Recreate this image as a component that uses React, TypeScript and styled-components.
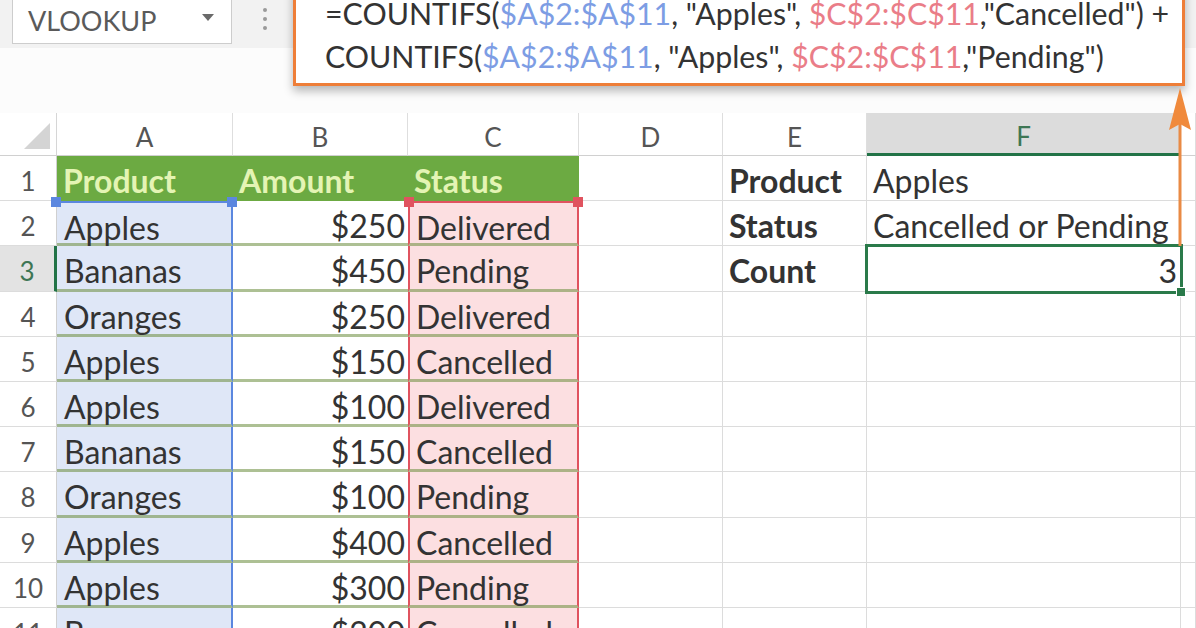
import React from 'react';
import styled, { createGlobalStyle, css } from 'styled-components';

const FONT = `Lato, "Open Sans", "Liberation Sans", sans-serif`;

const GlobalStyle = createGlobalStyle`
  html, body { margin: 0; padding: 0; }
  body { background: #fff; font-family: ${FONT}; overflow: hidden; }
  * { box-sizing: border-box; }
`;

const Page = styled.div`
  width: 1196px;
  height: 628px;
  overflow: hidden;
  position: relative;
  background: #fff;
  display: flex;
  flex-direction: column;
`;

const TopBar = styled.div`
  height: 113px;
  flex: none;
  display: flex;
  align-items: flex-start;
  background: linear-gradient(#f2f2f2 0 48px, #fcfcfc 48px);
  position: relative;
  z-index: 3;
`;

const NameBox = styled.div`
  margin-left: 12px;
  margin-top: -2px;
  width: 220px;
  height: 46px;
  border: 1.5px solid #cdcdcd;
  border-top: none;
  background: #fff;
  display: flex;
  align-items: center;
  justify-content: space-between;
  padding: 0 17px 0 15px;
  color: #5a5a5a;
  font-size: 27px;
`;

const Caret = styled.span`
  width: 0;
  height: 0;
  border-left: 6px solid transparent;
  border-right: 6px solid transparent;
  border-top: 7px solid #6a6a6a;
  margin-top: -6px;
`;

const Dots = styled.div`
  margin-left: 31px;
  margin-top: 8px;
  display: flex;
  flex-direction: column;
  gap: 5px;
`;

const Dot = styled.span`
  width: 4px;
  height: 4px;
  border-radius: 50%;
  background: #9a9a9a;
`;

const FormulaBox = styled.div`
  margin-left: 26px;
  margin-top: -14px;
  width: 892px;
  height: 100px;
  border: 3px solid #ee7e38;
  background: #fff;
  box-shadow: 0 5px 9px rgba(0, 0, 0, 0.28);
  padding: 3px 0 0 29px;
  font-size: 30.3px;
  color: #333;
`;

const FormulaLine = styled.div`
  line-height: 43px;
  white-space: nowrap;
`;

const Ref = styled.span<{ $c: 'blue' | 'red' }>`
  color: ${(p) => (p.$c === 'blue' ? '#7d9de4' : '#ea7d88')};
`;

const Sheet = styled.div`
  display: grid;
  grid-template-columns: 57px 176px 175px 171px 144px 144px 314px 1fr;
  grid-template-rows: 43px;
  grid-auto-rows: 45.2px;
  position: relative;
  flex: none;
`;

const Corner = styled.div`
  position: relative;
  border-right: 1.5px solid #d6d6d6;
  border-bottom: 1.5px solid #d0d0d0;
  &::after {
    content: '';
    position: absolute;
    right: 6px;
    bottom: 6px;
    width: 0;
    height: 0;
    border-left: 26px solid transparent;
    border-bottom: 26px solid #d4d4d4;
  }
`;

const ColHead = styled.div<{ $active?: boolean }>`
  display: flex;
  align-items: center;
  justify-content: center;
  font-size: 26px;
  color: #555;
  border-right: 1.5px solid #dedede;
  border-bottom: 1.5px solid #d0d0d0;
  padding-top: 5px;
  ${(p) =>
    p.$active &&
    css`
      background: #dcdcdc;
      color: #3e7654;
      border-bottom: 3px solid #227347;
    `}
`;

const RowHead = styled.div<{ $active?: boolean }>`
  display: flex;
  align-items: center;
  justify-content: center;
  font-size: 26px;
  color: #555;
  border-right: 1.5px solid #d0d0d0;
  border-bottom: 1.5px solid #dcdcdc;
  padding-top: 6px;
  ${(p) =>
    p.$active &&
    css`
      background: #e3e3e3;
      color: #3e7654;
      border-right: 3px solid #227347;
    `}
`;

type Kind = 'plain' | 'head' | 'blue' | 'red' | 'table';

const TABLE_LINE = 'rgba(105, 140, 60, 0.55)';

const Cell = styled.div<{
  $kind?: Kind;
  $right?: boolean;
  $bold?: boolean;
  $first?: boolean;
  $active?: boolean;
}>`
  position: relative;
  font-size: 32px;
  line-height: 44px;
  color: #333;
  white-space: nowrap;
  overflow: visible;
  padding: 3px 6px 0 6px;
  text-align: ${(p) => (p.$right ? 'right' : 'left')};
  font-weight: ${(p) => (p.$bold ? 700 : 400)};
  border-right: 1.5px solid #dcdcdc;
  border-bottom: 1.5px solid #dcdcdc;
  ${(p) =>
    p.$kind === 'head' &&
    css`
      background: #6caa42;
      color: #e4f4b4;
      font-weight: 700;
      border-right: none;
      border-bottom: none;
    `}
  ${(p) =>
    p.$kind === 'blue' &&
    css`
      background: #dfe7f7;
      border-right: 2.5px solid #5b87df;
      border-bottom: 3px solid ${TABLE_LINE};
      border-top: ${p.$first ? '2.5px solid #5b87df' : 'none'};
      padding-left: 7px;
    `}
  ${(p) =>
    p.$kind === 'table' &&
    css`
      border-right: none;
      border-bottom: 3px solid ${TABLE_LINE};
      padding-right: 3px;
    `}
  ${(p) =>
    p.$kind === 'red' &&
    css`
      background: #fcdfe1;
      border-left: 2.5px solid #e0535f;
      border-right: 2.5px solid #e0535f;
      border-bottom: 3px solid ${TABLE_LINE};
      border-top: ${p.$first ? '2.5px solid #e0535f' : 'none'};
    `}
  ${(p) =>
    p.$active &&
    css`
      z-index: 1;
      outline: 3px solid #2a7a4a;
      outline-offset: -1px;
      padding-right: 3px;
      &::after {
        content: '';
        position: absolute;
        right: -6px;
        bottom: -6px;
        width: 8px;
        height: 8px;
        background: #2a7a4a;
        border: 1px solid #fff;
      }
    `}
`;

const Handle = styled.span<{ $c: 'blue' | 'red'; $side: 'left' | 'right' }>`
  position: absolute;
  top: -6px;
  ${(p) => (p.$side === 'left' ? 'left: -6px;' : 'right: -6px;')}
  width: 10px;
  height: 10px;
  background: ${(p) => (p.$c === 'blue' ? '#5b87df' : '#e0535f')};
  z-index: 2;
`;

const Arrow = styled.svg`
  position: absolute;
  left: 1166px;
  top: 84px;
  z-index: 4;
  overflow: visible;
`;

const rows: [string, string, string][] = [
  ['Apples', '$250', 'Delivered'],
  ['Bananas', '$450', 'Pending'],
  ['Oranges', '$250', 'Delivered'],
  ['Apples', '$150', 'Cancelled'],
  ['Apples', '$100', 'Delivered'],
  ['Bananas', '$150', 'Cancelled'],
  ['Oranges', '$100', 'Pending'],
  ['Apples', '$400', 'Cancelled'],
  ['Apples', '$300', 'Pending'],
  ['Bananas', '$200', 'Cancelled'],
];

const side: Record<number, [string, string]> = {
  1: ['Product', 'Apples'],
  2: ['Status', 'Cancelled or Pending'],
  3: ['Count', '3'],
};

export default function App() {
  const cols = ['A', 'B', 'C', 'D', 'E', 'F', ''];
  return (
    <Page>
      <GlobalStyle />
      <TopBar>
        <NameBox>
          <span>VLOOKUP</span>
          <Caret />
        </NameBox>
        <Dots>
          <Dot />
          <Dot />
          <Dot />
        </Dots>
        <FormulaBox>
          <FormulaLine>
            =COUNTIFS(<Ref $c="blue">$A$2:$A$11</Ref>, "Apples", <Ref $c="red">$C$2:$C$11</Ref>,"Cancelled") +
          </FormulaLine>
          <FormulaLine>
            COUNTIFS(<Ref $c="blue">$A$2:$A$11</Ref>, "Apples", <Ref $c="red">$C$2:$C$11</Ref>,"Pending")
          </FormulaLine>
        </FormulaBox>
      </TopBar>
      <Sheet>
        <Corner />
        {cols.map((c, i) => (
          <ColHead key={i} $active={c === 'F'}>
            {c}
          </ColHead>
        ))}
        <RowHead>1</RowHead>
        <Cell $kind="head">Product</Cell>
        <Cell $kind="head">Amount</Cell>
        <Cell $kind="head">Status</Cell>
        <Cell />
        <Cell $bold>{side[1][0]}</Cell>
        <Cell>{side[1][1]}</Cell>
        <Cell />
        {rows.map((r, i) => {
          const n = i + 2;
          const s = side[n];
          return (
            <React.Fragment key={n}>
              <RowHead $active={n === 3}>{n}</RowHead>
              <Cell $kind="blue" $first={n === 2}>
                {n === 2 && <Handle $c="blue" $side="left" />}
                {n === 2 && <Handle $c="blue" $side="right" />}
                {r[0]}
              </Cell>
              <Cell $kind="table" $right>
                {r[1]}
              </Cell>
              <Cell $kind="red" $first={n === 2}>
                {n === 2 && <Handle $c="red" $side="left" />}
                {n === 2 && <Handle $c="red" $side="right" />}
                {r[2]}
              </Cell>
              <Cell />
              <Cell $bold>{s ? s[0] : ''}</Cell>
              <Cell $right={n === 3} $active={n === 3}>
                {s ? s[1] : ''}
              </Cell>
              <Cell />
            </React.Fragment>
          );
        })}
      </Sheet>
      <Arrow width="28" height="164" viewBox="0 0 28 164">
        <line x1="14" y1="20" x2="14" y2="162" stroke="#e98a45" strokeWidth="3" />
        <polygon points="14,4 25,46 14,40 3,46" fill="#f08a3c" />
      </Arrow>
    </Page>
  );
}
